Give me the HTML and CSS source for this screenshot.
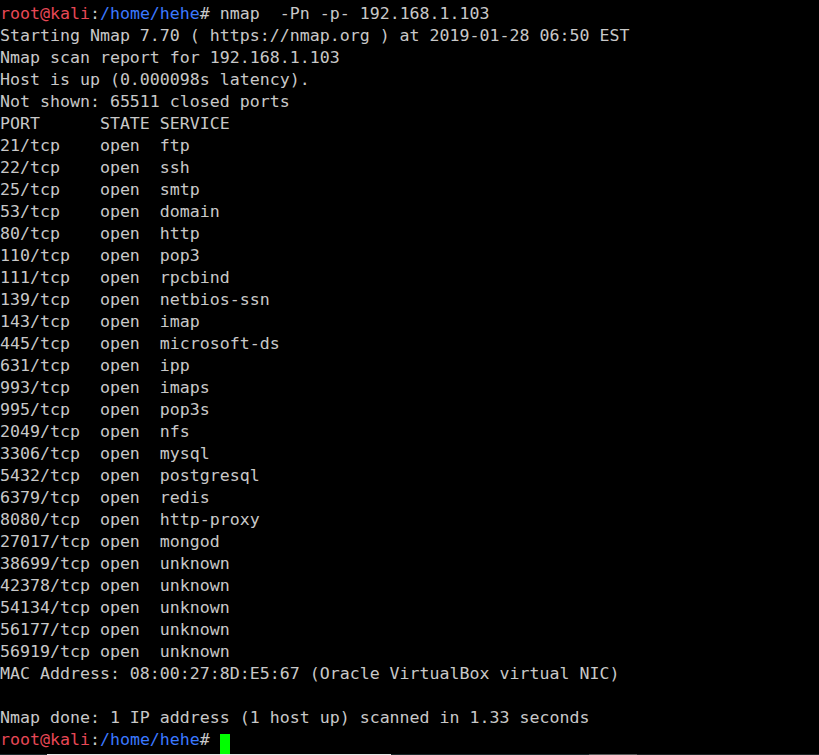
FILE: index.html
```html
<!DOCTYPE html>
<html>
<head>
<meta charset="utf-8">
<link rel="stylesheet" href="styles.css">
</head>
<body>
<div class="screen">
<pre class="term"><span class="red">root@kali</span>:<span class="blue">/home/hehe</span># nmap  -Pn -p- 192.168.1.103
Starting Nmap 7.70 ( https://nmap.org ) at 2019-01-28 06:50 EST
Nmap scan report for 192.168.1.103
Host is up (0.000098s latency).
Not shown: 65511 closed ports
PORT      STATE SERVICE
21/tcp    open  ftp
22/tcp    open  ssh
25/tcp    open  smtp
53/tcp    open  domain
80/tcp    open  http
110/tcp   open  pop3
111/tcp   open  rpcbind
139/tcp   open  netbios-ssn
143/tcp   open  imap
445/tcp   open  microsoft-ds
631/tcp   open  ipp
993/tcp   open  imaps
995/tcp   open  pop3s
2049/tcp  open  nfs
3306/tcp  open  mysql
5432/tcp  open  postgresql
6379/tcp  open  redis
8080/tcp  open  http-proxy
27017/tcp open  mongod
38699/tcp open  unknown
42378/tcp open  unknown
54134/tcp open  unknown
56177/tcp open  unknown
56919/tcp open  unknown
MAC Address: 08:00:27:8D:E5:67 (Oracle VirtualBox virtual NIC)

Nmap done: 1 IP address (1 host up) scanned in 1.33 seconds
<span class="red">root@kali</span>:<span class="blue">/home/hehe</span># <span class="cursor"> </span></pre>
<div class="taskbar">
<div class="tb-a"></div>
<div class="tb-b"></div>
<div class="tb-c"></div>
<div class="tb-d"></div>
<div class="tb-e"></div>
</div>
</div>
</body>
</html>
```

FILE: styles.css
```css
html, body {
  margin: 0;
  padding: 0;
  background: #000;
  width: 819px;
  height: 755px;
  overflow: hidden;
}
.screen {
  width: 819px;
  height: 755px;
  display: flex;
  flex-direction: column;
  background: #000;
}
.term {
  flex: 1;
  margin: 0;
  padding: 3px 0 0 0;
  font-family: "DejaVu Sans Mono", "Liberation Mono", monospace;
  font-size: 16.6px;
  line-height: 22px;
  color: #c8c8c8;
  white-space: pre;
}
.red { color: #e74856; }
.blue { color: #3b78ff; }
.cursor {
  display: inline-block;
  width: 10px;
  height: 20px;
  background: #00ff00;
  vertical-align: -5px;
}
.taskbar {
  height: 2px;
  display: flex;
}
.tb-a { width: 47px; background: #1c2a2c; }
.tb-b { width: 344px; background: #e6e6e6; }
.tb-c { width: 198px; background: #1c2a2c; }
.tb-d { width: 48px; background: #555858; }
.tb-e { flex: 1; background: #1e2526; }
```
